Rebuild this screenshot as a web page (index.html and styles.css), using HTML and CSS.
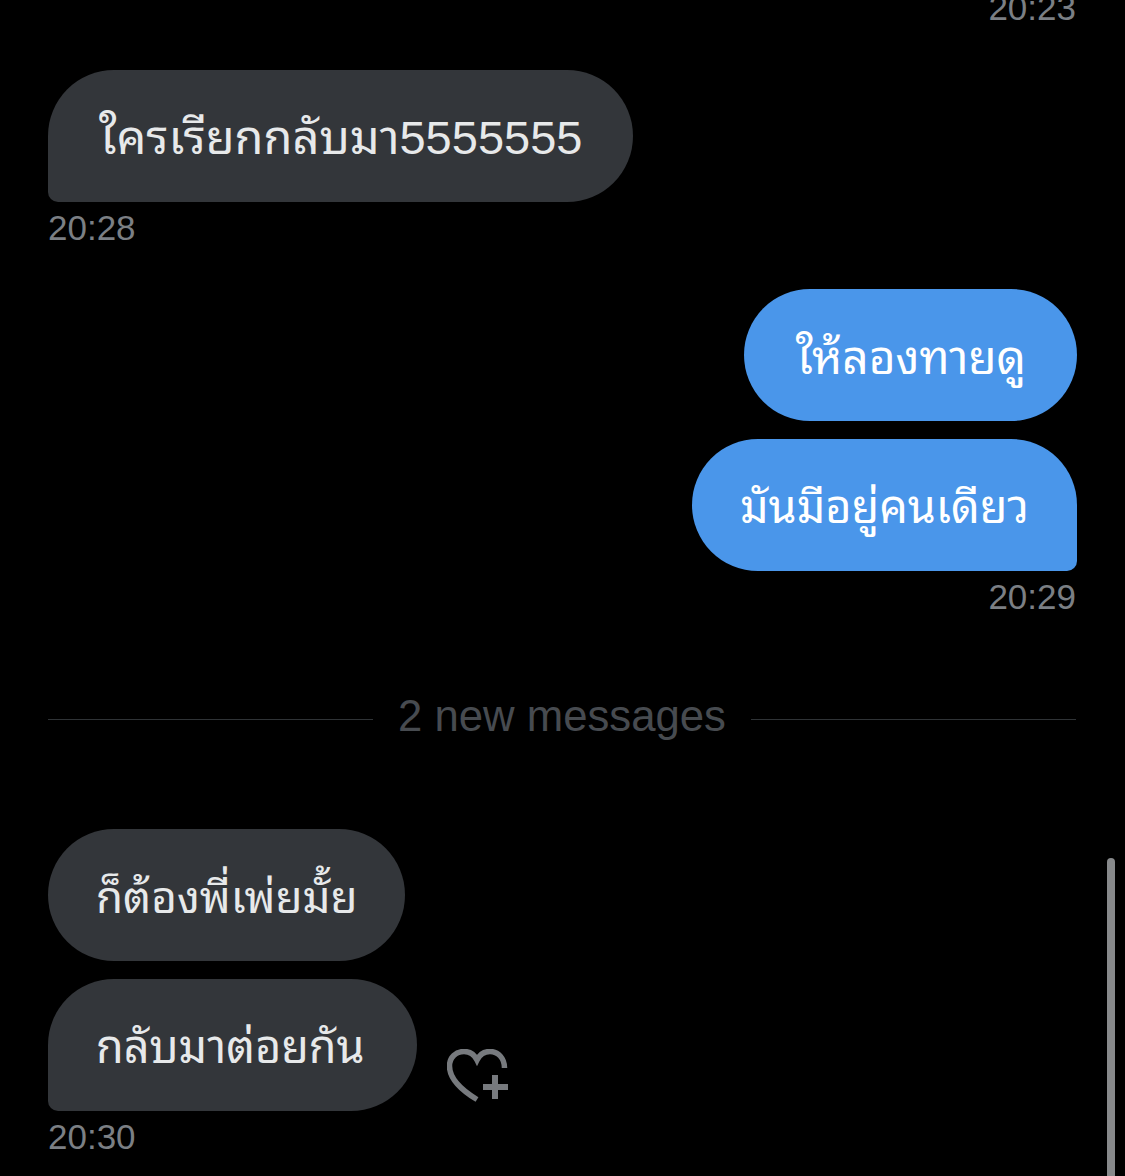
FILE: index.html
```html
<!DOCTYPE html>
<html lang="en">

<head>
    <meta charset="UTF-8">
    <meta name="viewport" content="width=device-width, initial-scale=1.0">
    <title>Messages</title>
    <link rel="stylesheet" href="styles.css">
</head>

<body>
    <div class="thread">
        <div class="time time-top time-right">20:23</div>

        <div class="bubble bubble-in bubble-last bubble-first-msg text-lg">ใครเรียกกลับมา5555555</div>
        <div class="time">20:28</div>

        <div class="bubble bubble-out bubble-group-start">ให้ลองทายดู</div>
        <div class="bubble bubble-out bubble-last text-md">มันมีอยู่คนเดียว</div>
        <div class="time time-right">20:29</div>

        <div class="divider">
            <span class="divider-line"></span>
            <span class="divider-text">2 new messages</span>
            <span class="divider-line"></span>
        </div>

        <div class="bubble bubble-in text-sm">ก็ต้องพี่เพ่ยมั้ย</div>
        <div class="row">
            <div class="bubble bubble-in bubble-last text-md text-pad">กลับมาต่อยกัน</div>
            <svg class="react" width="62" height="53" viewBox="0 0 62 53" fill="none" stroke="#777a7e">
                <!-- heart outline, open at the lower right -->
                <path d="M30 50.5 C16 42 2.5 31 2.5 17 C2.5 8.5 9 2.5 17 2.5 C22 2.5 27 5 30 11 C33 5 38 2.5 43 2.5 C51 2.5 57.5 9 57.5 19" stroke-width="5.5" />
                <path d="M48 26 V50 M36 38 H61" stroke-width="6" />
            </svg>
        </div>
        <div class="time">20:30</div>
    </div>

    <div class="scrollbar"></div>
</body>

</html>
```

FILE: styles.css
```css
/* Global Styles */
html,
body {
    height: 100%;
}

body {
    margin: 0;
    background-color: #000;
    font-family: "Liberation Sans", "Noto Sans Thai Looped", "Thonburi", "Garuda", "Loma", "Waree", "Noto Sans", sans-serif;
    overflow: hidden;
    position: relative;
}

.thread {
    display: flex;
    flex-direction: column;
    align-items: flex-start;
    padding: 0 48px;
}

.bubble {
    box-sizing: border-box;
    height: 132px;
    padding: 5px 51px 0 52px;
    display: flex;
    align-items: center;
    font-size: 46px;
    line-height: 60px;
    white-space: nowrap;
    border-radius: 66px;
}

/* the thai fallback is not quite the original's width, so sizes vary a little */
.text-lg {
    font-size: 47px;
    padding: 3px 51px 0 51px;
}

.text-md {
    font-size: 45px;
    padding: 5px 48px 0 48px;
}

.text-pad {
    padding: 6px 52px 0 48px;
}

.text-sm {
    font-size: 44px;
    padding: 6px 48px 0 48px;
}

.bubble-in {
    background-color: #33363a;
    color: #e7e9ea;
}

.bubble-out {
    background-color: #4a96ea;
    color: #fff;
    align-self: flex-end;
}

.bubble-in.bubble-last {
    border-bottom-left-radius: 10px;
}

.bubble-out.bubble-last {
    border-bottom-right-radius: 10px;
    margin-top: 18px;
}

.bubble-first-msg {
    margin-top: 43px;
}

.bubble-group-start {
    margin-top: 41px;
}

.row {
    display: flex;
    align-items: flex-end;
    gap: 30px;
    margin-top: 18px;
}

.react {
    margin-bottom: 9px;
}

.time {
    font-size: 35px;
    line-height: 40px;
    color: #7b7f84;
    margin-top: 6px;
}

.time-right {
    align-self: flex-end;
    margin-right: 1px;
}

.time-top {
    margin-top: -11px;
    line-height: 38px;
}

.divider {
    align-self: stretch;
    display: flex;
    align-items: center;
    gap: 25px;
    margin: 69px 1px 77px 0;
}

.divider-line {
    flex: 1;
    height: 1px;
    background-color: #2f3336;
}

.divider-text {
    font-size: 43.7px;
    line-height: 60px;
    padding-bottom: 6px;
    color: #474b50;
}

.scrollbar {
    position: absolute;
    top: 858px;
    bottom: 0;
    left: 1107px;
    width: 8px;
    background-color: #87898b;
    border-radius: 4px 4px 0 0;
}
```
